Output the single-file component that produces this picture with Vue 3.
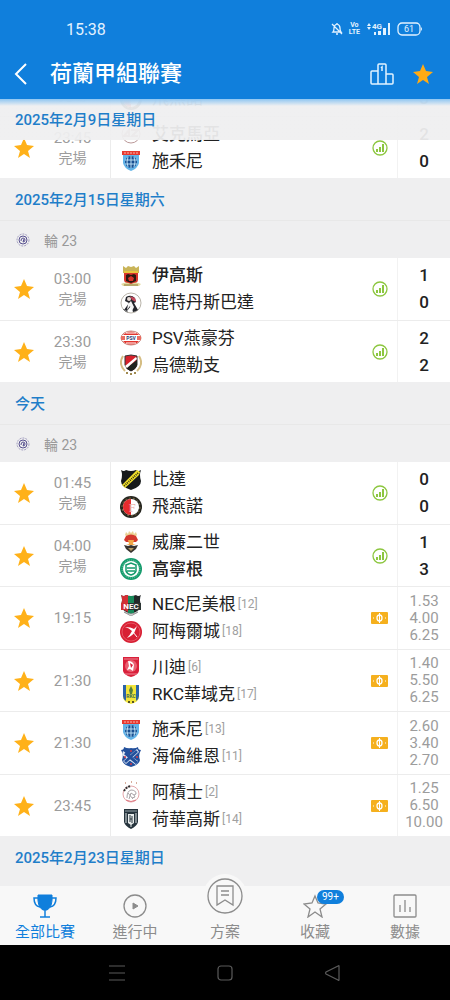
<script setup>
import { ref } from 'vue'

const activeTab = ref('all')

const tabs = [
  { id: 'all', label: '全部比賽' },
  { id: 'live', label: '進行中' },
  { id: 'plan', label: '方案' },
  { id: 'fav', label: '收藏', badge: '99+' },
  { id: 'data', label: '數據' }
]

const sections = ref([
  {
    id: 1,
    matches: [
      { id: 11, time: '21:30', done: true, fav: true, home: { name: '比達', logo: 'breda' }, away: { name: '飛燕諾', logo: 'feyenoord' }, score: [0, 3] },
      { id: 12, time: '23:45', done: true, fav: true, home: { name: '艾克馬亞', logo: 'alkmaar', win: true }, away: { name: '施禾尼', logo: 'zwolle' }, score: [2, 0] }
    ]
  },
  {
    id: 2,
    date: '2025年2月15日星期六',
    round: '輪 23',
    matches: [
      { id: 21, time: '03:00', done: true, fav: true, home: { name: '伊高斯', logo: 'eagles', win: true }, away: { name: '鹿特丹斯巴達', logo: 'sparta' }, score: [1, 0] },
      { id: 22, time: '23:30', done: true, fav: true, home: { name: 'PSV燕豪芬', logo: 'psv' }, away: { name: '烏德勒支', logo: 'utrecht' }, score: [2, 2] }
    ]
  },
  {
    id: 3,
    date: '今天',
    round: '輪 23',
    matches: [
      { id: 31, time: '01:45', done: true, fav: true, home: { name: '比達', logo: 'breda' }, away: { name: '飛燕諾', logo: 'feyenoord' }, score: [0, 0] },
      { id: 32, time: '04:00', done: true, fav: true, home: { name: '威廉二世', logo: 'willem' }, away: { name: '高寧根', logo: 'groningen', win: true }, score: [1, 3] },
      { id: 33, time: '19:15', fav: true, home: { name: 'NEC尼美根', logo: 'nec', rank: 12 }, away: { name: '阿梅爾城', logo: 'almere', rank: 18 }, odds: ['1.53', '4.00', '6.25'] },
      { id: 34, time: '21:30', fav: true, home: { name: '川迪', logo: 'twente', rank: 6 }, away: { name: 'RKC華域克', logo: 'rkc', rank: 17 }, odds: ['1.40', '5.50', '6.25'] },
      { id: 35, time: '21:30', fav: true, home: { name: '施禾尼', logo: 'zwolle', rank: 13 }, away: { name: '海倫維恩', logo: 'heerenveen', rank: 11 }, odds: ['2.60', '3.40', '2.70'] },
      { id: 36, time: '23:45', fav: true, home: { name: '阿積士', logo: 'ajax', rank: 2 }, away: { name: '荷華高斯', logo: 'heracles', rank: 14 }, odds: ['1.25', '6.50', '10.00'] }
    ]
  },
  {
    id: 4,
    date: '2025年2月23日星期日',
    matches: []
  }
])

const toggleFav = (match) => {
  match.fav = !match.fav
}
</script>

<template>
  <div class="app">
    <!-- club badges -->
    <svg class="sprite" aria-hidden="true">
      <symbol id="logo-eagles" viewBox="0 0 22 22">
        <path d="M3 1l3 2 2-2 3 1 3-1 2 2 3-2v7H3z" fill="#c9b458" />
        <path d="M4 6h14v9q0 3-7 5-7-2-7-5z" fill="#d8352b" />
        <path d="M4 6h14v2H4z" fill="#e9c73f" />
        <path d="M6 10l2-1 3 1 3-1 2 1v6l-5 2-5-2z" fill="#2b1a12" />
        <path d="M8 13l3-2 3 2-1 3h-4z" fill="#d8352b" />
        <path d="M1 19q5-3 10 0 5-3 10 0l-2 2H3z" fill="#e3d9a0" />
        <path d="M4 20h14" stroke="#8c7a34" stroke-width="1" />
      </symbol>
      <symbol id="logo-sparta" viewBox="0 0 22 22">
        <circle cx="11" cy="11" r="10" fill="#fff" stroke="#b9b4aa" stroke-width="1" />
        <path d="M6 5q5-3 9 1l1 4-2 1 4 7q-3 2-5 2l-2-6-4 5-3-1 5-7-4-2z" fill="#25262c" />
        <path d="M10 4l5 2 1 4-4-2z" fill="#c4475a" />
        <path d="M8 12l3-3 3 6-2 4-2-5-3 4z" fill="#f4f4f4" />
        <circle cx="9" cy="7" r="2" fill="#e9ddd7" />
        <path d="M3 17q2 3 5 3" fill="none" stroke="#777" stroke-width="1" />
      </symbol>
      <symbol id="logo-psv" viewBox="0 0 22 22">
        <ellipse cx="11" cy="11" rx="10" ry="7" fill="#fff" stroke="#c9877e" stroke-width="1" />
        <path d="M4 7q7-5 14 0l1 1H3z" fill="#e2342d" />
        <path d="M3 14h16l-2 2q-6 3-12 0z" fill="#e2342d" />
        <path d="M6 6h10M6 16h10" stroke="#fff" stroke-width="1" />
        <path d="M1 9h4v4H1zM17 9h4v4h-4z" fill="#e86d62" />
        <text x="11" y="13" font-size="5" font-weight="700" text-anchor="middle" fill="#253a74">PSV</text>
      </symbol>
      <symbol id="logo-utrecht" viewBox="0 0 22 22">
        <path d="M3 2q-5 8 2 15M19 2q5 8-2 15" fill="none" stroke="#d5bd83" stroke-width="2" />
        <path d="M5 2l6-1 6 1v9q-1 4-6 6-5-2-6-6z" fill="#d6222c" stroke="#333" stroke-width="1" />
        <path d="M17 6v5q-1 4-6 6-3-1-5-3z" fill="#20231f" />
        <path d="M5 12L16 3l1 2L7 14z" fill="#fff" />
        <path d="M6 19h2M10 20h2M14 19h2" stroke="#a08a50" stroke-width="2" />
      </symbol>
      <symbol id="logo-breda" viewBox="0 0 22 22">
        <path d="M1 1q3 2 5 0 5 2 10 0 2 2 5 0-2 5 0 11 0 6-10 9Q1 18 1 12q2-6 0-11z" fill="#16191a" />
        <path d="M17 1l3 2-1 3L5 19l-3-3z" fill="#f3e22a" />
        <path d="M18 4L4 17" stroke="#3a3610" stroke-width="2" stroke-dasharray="1 1" />
      </symbol>
      <symbol id="logo-feyenoord" viewBox="0 0 22 22">
        <circle cx="11" cy="11" r="11" fill="#25251f" />
        <circle cx="11" cy="11" r="9" fill="none" stroke="#827044" stroke-width="1" stroke-dasharray="2 2" />
        <circle cx="11" cy="11" r="8" fill="#fff" />
        <path d="M11 3a8 8 0 0 0 0 16z" fill="#e52b2d" />
        <text x="12" y="16" font-size="13" font-family="Liberation Serif" text-anchor="middle" fill="#e9a79d">F</text>
      </symbol>
      <symbol id="logo-willem" viewBox="0 0 22 22">
        <path d="M5 4l1-3 2 2 1-3 2 2 2-2 1 3 2-2 1 3-2 2H7z" fill="#ead295" />
        <path d="M6 5q5-3 10 0l2 4-2 2H6L4 9z" fill="#d4382d" />
        <path d="M8 9h6l-1 4 3 1H6l3-1z" fill="#f2a648" />
        <path d="M4 14l4 1 3-1 3 1 4-1-2 4-5 4-5-4z" fill="#37332f" />
        <path d="M8 17h6l-3 3z" fill="#b69962" />
      </symbol>
      <symbol id="logo-groningen" viewBox="0 0 22 22">
        <circle cx="11" cy="11" r="11" fill="#149b6c" />
        <circle cx="11" cy="11" r="8" fill="#fff" />
        <circle cx="11" cy="11" r="9" fill="none" stroke="#76c9a9" stroke-width="1" stroke-dasharray="1 1" />
        <path d="M6 7l5-2 5 2v6q-1 3-5 4-4-1-5-4z" fill="none" stroke="#149b6c" stroke-width="1.5" />
        <path d="M7 10h8M7 13h8" stroke="#149b6c" stroke-width="1.5" />
      </symbol>
      <symbol id="logo-nec" viewBox="0 0 22 22">
        <path d="M1 1q3 2 5 0 5 2 10 0 2 2 5 0-2 4 0 10 0 6-10 9Q1 17 1 11q2-6 0-10z" fill="#232829" />
        <path d="M1 1q3 2 5 0h2v17q-7-3-7-7 2-6 0-10z" fill="#d22f35" />
        <path d="M8 2h6v17l-3 1-3-1z" fill="#19895a" />
        <path d="M1 9h20v7H1z" fill="#2b3433" />
        <path d="M1 9h7v7H1z" fill="#d22f35" />
        <text x="11" y="15" font-size="8" font-weight="700" text-anchor="middle" fill="#fff">NEC</text>
        <path d="M4 18q7 4 14 0l-7 4z" fill="#f2f2f2" stroke="#999" stroke-width="1" />
      </symbol>
      <symbol id="logo-almere" viewBox="0 0 22 22">
        <circle cx="11" cy="11" r="11" fill="#d81f33" />
        <circle cx="11" cy="11" r="9" fill="none" stroke="#ef7a82" stroke-width="1" opacity=".6" />
        <path d="M5 6q6 0 9 2l3-3-2 5q-1 4-8 7 3-3 5-7-3-3-7-4z" fill="#fff" />
        <path d="M13 11l4 5" stroke="#fff" stroke-width="1" />
      </symbol>
      <symbol id="logo-twente" viewBox="0 0 22 22">
        <path d="M3 1h16v14q-1 4-8 6-7-2-8-6z" fill="#d9203a" />
        <path d="M4 3h14M5 18h12" stroke="#ee8794" stroke-width="1" />
        <circle cx="11" cy="10" r="6" fill="#ea6072" />
        <path d="M8 5q5 0 6 4l-1 6-3-2-3 1 2-4z" fill="#fff" />
        <path d="M10 7l3 2-2 3z" fill="#d9203a" />
      </symbol>
      <symbol id="logo-rkc" viewBox="0 0 22 22">
        <path d="M3 2h16v12q0 5-8 7-8-2-8-7z" fill="#f2e53a" />
        <path d="M3 2h3v16q-3-2-3-5zM16 2h3v11q0 3-3 5z" fill="#2a63a9" />
        <path d="M11 3l2 4-1 4h-2L9 7z" fill="#54803e" />
        <text x="11" y="15" font-size="5" font-weight="700" text-anchor="middle" fill="#3c6f55">RKC</text>
        <circle cx="9" cy="19" r="1" fill="#222" />
        <circle cx="13" cy="19" r="1" fill="#222" />
      </symbol>
      <symbol id="logo-zwolle" viewBox="0 0 22 22">
        <path d="M3 2h16v11q-1 5-8 8-7-3-8-8z" fill="#63b4e8" />
        <path d="M2 1h18v4H2z" fill="#e8392f" />
        <path d="M4 3h14" stroke="#f7b7b0" stroke-width="1" stroke-dasharray="2 1" />
        <circle cx="11" cy="12" r="6" fill="#174e91" />
        <path d="M5 10h12M5 14h12M11 6v12M8 7q-2 5 0 10M14 7q2 5 0 10" fill="none" stroke="#b9def4" stroke-width="1" />
      </symbol>
      <symbol id="logo-heerenveen" viewBox="0 0 22 22">
        <path d="M1 4q3 0 3-3 4 2 7 1 4 1 7-1 0 3 3 3-3 5-1 10-1 5-9 7-8-2-9-7 2-5-1-10z" fill="#23509c" />
        <path d="M3 5l15 10-2 4L2 9zM17 3l2 3L6 18l-3-3z" fill="#dfe7f3" />
        <path d="M5 7l12 10M17 5L5 16" stroke="#23509c" stroke-width="3" />
        <circle cx="11" cy="5" r="1" fill="#d33847" />
        <circle cx="5" cy="11" r="1" fill="#d33847" />
        <circle cx="17" cy="11" r="1" fill="#d33847" />
        <circle cx="11" cy="18" r="1" fill="#d33847" />
      </symbol>
      <symbol id="logo-ajax" viewBox="0 0 22 22">
        <path d="M5 2h1M11 1h1M16 2h1" stroke="#d8ae9d" stroke-width="2" />
        <circle cx="11" cy="13" r="8" fill="#fff" stroke="#e4a7ab" stroke-width="1" />
        <path d="M4 10q2-4 7-5" fill="none" stroke="#333" stroke-width="2" stroke-dasharray="2 1" />
        <path d="M7 17q0-7 4-8 5 0 5 4l-2 1 1 2-3 1M9 18l2-6 3 2M8 12l5 6" fill="none" stroke="#aaa4a8" stroke-width="1" />
        <path d="M6 19q5 3 10 0" fill="none" stroke="#df7b84" stroke-width="1" />
      </symbol>
      <symbol id="logo-heracles" viewBox="0 0 22 22">
        <path d="M4 1h14v13q-1 4-7 7-6-3-7-7z" fill="#26343d" />
        <path d="M6 5v10M16 5v10M11 15v4" stroke="#dbe2e4" stroke-width="1" />
        <path d="M5 3h12" stroke="#92a0a7" stroke-width="1" />
        <path d="M8 6h6v9l-3 2-3-2z" fill="#e8ecec" />
        <path d="M10 7v7M12 8v7M10 11h2" stroke="#26343d" stroke-width="1" />
      </symbol>
      <symbol id="logo-alkmaar" viewBox="0 0 22 22">
        <circle cx="11" cy="11" r="9" fill="#fff" stroke="#b99" stroke-width="1" />
        <path d="M4 13l5-6v6zM11 7h7l-6 6h6" fill="none" stroke="#b99" stroke-width="2" />
      </symbol>
      <symbol id="star" viewBox="0 0 22 22">
        <path d="M11 1l3 7 7 1-6 5 2 7-6-4-6 4 2-7-6-5 7-1z" />
      </symbol>
    </svg>

    <header class="header">
      <div class="status-bar">
        <span class="clock">15:38</span>
        <div class="status-icons">
          <svg class="bell" viewBox="0 0 12 14" fill="none" stroke="#e2f2ff" stroke-width="1.3">
            <path d="M2 10q1-1 1-4 0-3 3-4 3 1 3 4 0 3 1 4zM5 12h2M6 1v1M1 2l10 10" />
          </svg>
          <span class="volte"><span>Vo</span><span>LTE</span></span>
          <svg class="signal" viewBox="0 0 25 14" fill="#e2f2ff">
            <path d="M1 4l2-3 2 3zM1 5h4L3 8zM8 10h2v3H8zM12 9h3v4h-3zM17 6h3v7h-3zM22 1h2v12h-2z" />
            <text x="6" y="7" font-size="8" font-weight="700">4G</text>
          </svg>
          <svg class="battery" viewBox="0 0 26 14">
            <rect x="1" y="1" width="22" height="12" rx="4" fill="none" stroke="#e2f2ff" stroke-width="1.3" />
            <path d="M24 5q2 2 0 4z" fill="#e2f2ff" />
            <text x="12" y="10" font-size="9" text-anchor="middle" fill="#e2f2ff">61</text>
          </svg>
        </div>
      </div>
      <div class="title-bar">
        <button class="icon-btn back" aria-label="返回">
          <svg viewBox="0 0 14 22" fill="none" stroke="#fff" stroke-width="2"><path d="M12 1L2 11l10 10" /></svg>
        </button>
        <h1>荷蘭甲組聯賽</h1>
        <button class="icon-btn podium" aria-label="排名">
          <svg viewBox="0 0 24 22" fill="none" stroke="#e2f4ff" stroke-width="1.5">
            <path d="M8 21V2q0-1 1-1h6q1 0 1 1v19M8 8H2q-1 0-1 1v11q0 1 1 1h20q1 0 1-1v-8q0-1-1-1h-6M11 5l1-1v4" />
          </svg>
        </button>
        <button class="icon-btn fav-league" aria-label="收藏聯賽">
          <svg><use href="#star" /></svg>
        </button>
      </div>
    </header>

    <main class="content">
      <h2 class="date sticky">2025年2月9日星期日</h2>
      <div class="list">
        <section v-for="section in sections" :key="section.id">
          <h2 v-if="section.date" class="date">{{ section.date }}</h2>
          <div v-if="section.round" class="round">
            <svg viewBox="0 0 14 14" fill="none" stroke="#57508f">
              <circle cx="7" cy="7" r="6" stroke-dasharray="2 1" opacity=".5" />
              <circle cx="7" cy="7" r="4" />
              <path d="M5 8q0-3 2-3t2 2-2 2l1-3" />
            </svg>
            <span>{{ section.round }}</span>
          </div>
          <div class="matches">
            <article v-for="match in section.matches" :key="match.id" class="match">
              <button class="star-btn" :class="{ off: !match.fav }" aria-label="收藏比賽" @click="toggleFav(match)">
                <svg><use href="#star" /></svg>
              </button>
              <div class="time">
                <span>{{ match.time }}</span>
                <span v-if="match.done" class="state">完場</span>
              </div>
              <div class="teams">
                <div v-for="team in [match.home, match.away]" :key="team.name" class="team" :class="{ win: team.win }">
                  <svg class="logo"><use :href="'#logo-' + team.logo" /></svg>
                  <span>{{ team.name }}</span>
                  <span v-if="team.rank" class="rank">[{{ team.rank }}]</span>
                </div>
              </div>
              <div class="tip">
                <svg v-if="match.score" class="chart" viewBox="0 0 16 16">
                  <circle cx="8" cy="8" r="7" fill="none" stroke="#8cc63f" stroke-width="1.3" />
                  <path d="M4 9h2v3H4zM7 7h2v5H7zM10 4h2v8h-2z" fill="#8cc63f" />
                </svg>
                <svg v-else class="ticket" viewBox="0 0 17 12">
                  <rect width="17" height="12" rx="1" fill="#f5b01e" />
                  <ellipse cx="8.5" cy="6" rx="2.5" ry="3" fill="none" stroke="#fff" stroke-width="1.3" />
                  <path d="M8.5 1v10M2 6h1M14 6h1" stroke="#fff" />
                </svg>
              </div>
              <div v-if="match.score" class="score">
                <span v-for="(goal, i) in match.score" :key="i">{{ goal }}</span>
              </div>
              <div v-else class="odds">
                <span v-for="(odd, i) in match.odds" :key="i">{{ odd }}</span>
              </div>
            </article>
          </div>
        </section>
      </div>
    </main>

    <nav class="tabs">
      <button
        v-for="tab in tabs"
        :key="tab.id"
        class="tab"
        :class="{ active: activeTab === tab.id, raised: tab.id === 'plan' }"
        @click="activeTab = tab.id"
      >
        <span class="tab-icon">
          <svg v-if="tab.id === 'all'" viewBox="0 0 24 24" fill="none" stroke="currentColor">
            <path d="M5 1h14q1 12-5 15h-4Q4 13 5 1z" fill="currentColor" />
            <path d="M5 4H1q0 8 6 9M19 4h4q0 8-6 9M12 16v7M7 23h10" stroke-width="1.5" />
          </svg>
          <svg v-else-if="tab.id === 'live'" viewBox="0 0 24 24" fill="none" stroke="currentColor">
            <circle cx="12" cy="12" r="11" stroke-width="1.3" />
            <path d="M10 9l5 3-5 3z" fill="currentColor" />
          </svg>
          <svg v-else-if="tab.id === 'plan'" viewBox="0 0 36 36" fill="none" stroke="currentColor" stroke-width="1.3">
            <circle cx="18" cy="18" r="17" />
            <path d="M10 8h16v19l-8-5-8 5zM14 13h8M14 17h8" />
          </svg>
          <svg v-else-if="tab.id === 'fav'" viewBox="0 0 24 24" fill="none" stroke="currentColor" stroke-width="1.3">
            <path d="M12 2l3 7 8 1-6 5 2 8-7-5-7 5 2-8-6-5 8-1z" />
          </svg>
          <svg v-else viewBox="0 0 24 24" fill="none" stroke="currentColor" stroke-width="1.3">
            <rect x="1" y="1" width="22" height="22" rx="1" />
            <path d="M7 11v7M12 6v12M17 13v5" />
          </svg>
          <span v-if="tab.badge" class="badge">{{ tab.badge }}</span>
        </span>
        <span>{{ tab.label }}</span>
      </button>
    </nav>

    <div class="system-nav">
      <button aria-label="選單">
        <svg viewBox="0 0 18 18"><path d="M1 2h16M1 9h16M1 16h16" /></svg>
      </button>
      <button aria-label="主畫面">
        <svg viewBox="0 0 18 18"><rect x="2" y="2" width="14" height="14" rx="3" /></svg>
      </button>
      <button aria-label="返回上一頁">
        <svg viewBox="0 0 18 18"><path d="M15 2v14q0 1-1 0L2 10q-1-1 0-2l12-6q1-1 1 0z" /></svg>
      </button>
    </div>
  </div>
</template>

<style>
body {
  margin: 0;
  background: #fff;
}
</style>

<style scoped>
.app {
  display: flex;
  flex-direction: column;
  height: 100vh;
  overflow: hidden;
  font-family: Roboto, "Noto Sans CJK TC", sans-serif;
  color: #222;
}
.app * {
  box-sizing: border-box;
}
.sprite {
  display: none;
}
button {
  display: flex;
  align-items: center;
  justify-content: center;
  padding: 0;
  border: none;
  background: none;
  font: inherit;
  color: inherit;
  cursor: pointer;
}
h1,
h2 {
  margin: 0;
}
.header {
  flex-shrink: 0;
  background: #107fdc;
  color: #fff;
}
.status-bar {
  display: flex;
  align-items: center;
  justify-content: space-between;
  height: 48px;
  padding: 10px 27px 0 66px;
}
.clock {
  font-size: 16px;
  color: #e2f2ff;
}
.status-icons {
  display: flex;
  align-items: center;
  gap: 6px;
}
.bell {
  width: 12px;
  height: 14px;
}
.volte {
  display: flex;
  flex-direction: column;
  align-items: center;
  font-size: 7px;
  line-height: 7px;
  font-weight: 700;
  color: #e2f2ff;
}
.signal {
  width: 25px;
  height: 14px;
}
.battery {
  width: 26px;
  height: 14px;
}
.title-bar {
  display: flex;
  align-items: center;
  height: 51px;
  padding: 0 16px 0 14px;
}
.title-bar h1 {
  flex: 1;
  padding-left: 22px;
  font-size: 22px;
  line-height: 32px;
  font-weight: 500;
}
.back svg {
  width: 14px;
  height: 22px;
}
.podium svg {
  width: 24px;
  height: 22px;
}
.fav-league {
  margin-left: 18px;
}
.fav-league svg {
  width: 22px;
  height: 22px;
  fill: #ffab14;
}
.content {
  position: relative;
  flex: 1;
  min-height: 0;
  overflow: auto;
  background: #efeff0;
  scrollbar-width: none;
}
.date {
  height: 41px;
  padding-left: 15px;
  font-size: 15px;
  line-height: 42px;
  font-weight: 500;
  color: #1f7ec9;
}
.sticky {
  position: sticky;
  top: 0;
  z-index: 1;
  background: linear-gradient(#8fc6f2, rgba(239, 239, 240, 0.94) 7px);
}
.list {
  margin-top: -86px;
}
.round {
  display: flex;
  align-items: center;
  gap: 14px;
  height: 38px;
  padding-left: 16px;
  border-top: 1px solid #e8e8e8;
  font-size: 14px;
  color: #999;
}
.round svg {
  width: 14px;
  height: 14px;
}
.matches {
  display: grid;
  grid-auto-rows: 63px 62px;
}
.match {
  display: grid;
  grid-template-columns: 48px 63px 1fr 36px 52px;
  border-bottom: 1px solid #ececec;
  background: #fff;
}
.match:last-child {
  border-bottom-color: #efeff0;
}
.star-btn svg {
  width: 22px;
  height: 22px;
  fill: #ffb119;
}
.star-btn.off svg {
  fill: #ddd;
}
.time {
  display: flex;
  flex-direction: column;
  align-items: center;
  justify-content: center;
  padding-right: 13px;
  border-right: 1px solid #ececec;
  font-size: 15px;
  line-height: 20px;
  color: #9c9c9c;
}
.state {
  font-size: 14px;
}
.teams {
  display: flex;
  flex-direction: column;
  justify-content: center;
  padding-left: 9px;
}
.team {
  display: flex;
  align-items: center;
  height: 27px;
  font-size: 17px;
  line-height: 27px;
  white-space: nowrap;
}
.team.win {
  font-weight: 500;
}
.logo {
  width: 22px;
  height: 22px;
  margin-right: 10px;
}
.rank {
  margin-left: 2px;
  font-size: 12px;
  color: #a0a0a0;
}
.tip {
  display: flex;
  align-items: center;
  justify-content: center;
  border-right: 1px solid #f2f2f2;
}
.chart {
  width: 16px;
  height: 16px;
}
.ticket {
  width: 17px;
  height: 12px;
}
.score,
.odds {
  display: flex;
  flex-direction: column;
  align-items: center;
  justify-content: center;
}
.score {
  font-size: 17px;
  line-height: 27px;
  font-weight: 500;
}
.odds {
  font-size: 15px;
  line-height: 17px;
  color: #9c9c9c;
}
.tabs {
  position: relative;
  z-index: 2;
  display: flex;
  flex-shrink: 0;
  height: 59px;
  background: #f8f8f8;
}
.tab {
  flex: 1;
  flex-direction: column;
  justify-content: flex-end;
  gap: 3px;
  padding-bottom: 2px;
  font-size: 15px;
  line-height: 22px;
  color: #8c8c8c;
}
.tab.active {
  color: #107fdc;
}
.tab-icon {
  position: relative;
  display: flex;
  width: 24px;
  height: 24px;
}
.tab-icon svg {
  width: 100%;
  height: 100%;
}
.raised .tab-icon {
  flex-shrink: 0;
  width: 44px;
  height: 44px;
  padding: 4px;
  border-radius: 50%;
  background: #f8f8f8;
}
.badge {
  position: absolute;
  top: -4px;
  left: 14px;
  padding: 0 5px;
  border-radius: 8px;
  background: #107fdc;
  color: #fff;
  font-size: 10px;
  line-height: 14px;
}
.system-nav {
  display: flex;
  flex-shrink: 0;
  align-items: center;
  justify-content: center;
  gap: 90px;
  height: 55px;
  background: #000;
}
.system-nav svg {
  width: 18px;
  height: 18px;
  fill: none;
  stroke: #5a5a5a;
  stroke-width: 1.2;
}
</style>
